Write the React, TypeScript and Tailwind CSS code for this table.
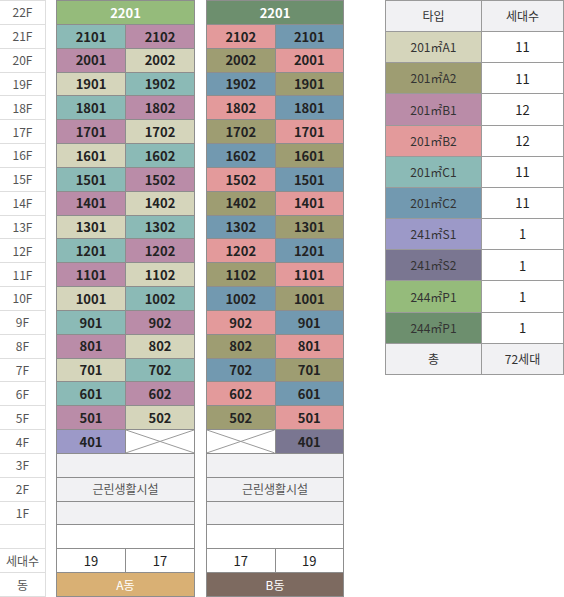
import React from "react";

const COLOR = {
  A1: "bg-[#d5d5bb]",
  A2: "bg-[#9e9d72]",
  B1: "bg-[#ba8ca8]",
  B2: "bg-[#e39a9b]",
  C1: "bg-[#8bbab6]",
  C2: "bg-[#7299b0]",
  S1: "bg-[#9c99c8]",
  S2: "bg-[#7a7691]",
  P1: "bg-[#95bb7b]",
  P2: "bg-[#6d8f6e]",
};

const cycleA = [
  [COLOR.C1, COLOR.B1],
  [COLOR.B1, COLOR.A1],
  [COLOR.A1, COLOR.C1],
];
const cycleB = [
  [COLOR.B2, COLOR.C2],
  [COLOR.A2, COLOR.B2],
  [COLOR.C2, COLOR.A2],
];

const floors = Array.from({ length: 17 }, (_, i) => 21 - i); // 21F..5F

const labels = [
  ...Array.from({ length: 22 }, (_, i) => `${22 - i}F`),
  "",
  "세대수",
  "동",
];

const types = [
  { name: "201㎡A1", bg: COLOR.A1, count: "11" },
  { name: "201㎡A2", bg: COLOR.A2, count: "11" },
  { name: "201㎡B1", bg: COLOR.B1, count: "12" },
  { name: "201㎡B2", bg: COLOR.B2, count: "12" },
  { name: "201㎡C1", bg: COLOR.C1, count: "11" },
  { name: "201㎡C2", bg: COLOR.C2, count: "11" },
  { name: "241㎡S1", bg: COLOR.S1, count: "1" },
  { name: "241㎡S2", bg: COLOR.S2, count: "1" },
  { name: "244㎡P1", bg: COLOR.P1, count: "1" },
  { name: "244㎡P1", bg: COLOR.P2, count: "1" },
];

function Unit({ bg, children }: { bg: string; children: React.ReactNode }) {
  return (
    <div className={`${bg} flex items-center justify-center text-[13px] font-bold text-[#222]`}>
      {children}
    </div>
  );
}

function Crossed() {
  return (
    <div className="bg-white">
      <svg className="w-full h-full block" viewBox="0 0 100 100" preserveAspectRatio="none">
        <line x1="0" y1="0" x2="100" y2="100" stroke="#9a9a9a" strokeWidth="1" vectorEffect="non-scaling-stroke" />
        <line x1="100" y1="0" x2="0" y2="100" stroke="#9a9a9a" strokeWidth="1" vectorEffect="non-scaling-stroke" />
      </svg>
    </div>
  );
}

function Building({
  top,
  cycle,
  left,
  right,
  counts,
  name,
  nameBg,
  topBg,
  width,
}: {
  top: string;
  cycle: string[][];
  left: string;
  right: string;
  counts: [string, string];
  name: string;
  nameBg: string;
  topBg: string;
  width: string;
}) {
  return (
    <div
      className={`grid grid-cols-2 grid-rows-[repeat(25,minmax(0,1fr))] gap-px bg-[#8d8d8d] p-px h-[597px] ${width}`}
    >
      <div className={`col-span-2 ${topBg} flex items-center justify-center text-[13px] font-bold text-white`}>
        {top}
      </div>
      {floors.map((f, i) => {
        const [c1, c2] = cycle[i % 3];
        return (
          <React.Fragment key={f}>
            <Unit bg={c1}>{`${f}${left}`}</Unit>
            <Unit bg={c2}>{`${f}${right}`}</Unit>
          </React.Fragment>
        );
      })}
      {left === "01" ? (
        <>
          <Unit bg={COLOR.S1}>401</Unit>
          <Crossed />
        </>
      ) : (
        <>
          <Crossed />
          <Unit bg={COLOR.S2}>401</Unit>
        </>
      )}
      <div className="col-span-2 bg-[#f1f1f3]" />
      <div className="col-span-2 bg-[#f1f1f3] flex items-center justify-center text-[12px] text-[#555]">
        근린생활시설
      </div>
      <div className="col-span-2 bg-[#f1f1f3]" />
      <div className="col-span-2 bg-white" />
      <div className="bg-white flex items-center justify-center text-[13px] text-[#222]">{counts[0]}</div>
      <div className="bg-white flex items-center justify-center text-[13px] text-[#222]">{counts[1]}</div>
      <div className={`col-span-2 ${nameBg} flex items-center justify-center text-[12px] text-white`}>
        {name}
      </div>
    </div>
  );
}

export default function App() {
  return (
    <div className="flex items-start bg-white w-[564px] h-[597px] overflow-hidden font-['Noto_Sans_CJK_KR','Noto_Sans',sans-serif]">
      <div className="grid grid-rows-[repeat(25,minmax(0,1fr))] gap-px bg-[#dedede] py-px pr-px h-[597px] w-[46px]">
        {labels.map((l, i) => (
          <div key={i} className="bg-white flex items-center justify-center text-[12px] text-[#555]">
            {l}
          </div>
        ))}
      </div>

      <div className="ml-[10px]">
        <Building
          top="2201"
          topBg="bg-[#95bb7b]"
          cycle={cycleA}
          left="01"
          right="02"
          counts={["19", "17"]}
          name="A동"
          nameBg="bg-[#d9b074]"
          width="w-[139px]"
        />
      </div>

      <div className="ml-[11px]">
        <Building
          top="2201"
          topBg="bg-[#6d8f6e]"
          cycle={cycleB}
          left="02"
          right="01"
          counts={["17", "19"]}
          name="B동"
          nameBg="bg-[#7d6a60]"
          width="w-[138px]"
        />
      </div>

      <div className="ml-[41px] grid grid-cols-[95px_1fr] grid-rows-[repeat(12,minmax(0,1fr))] gap-px bg-[#9a9a9a] p-px h-[375px] w-[179px]">
        <div className="bg-[#f1f1f3] flex items-center justify-center text-[12px] text-[#333]">타입</div>
        <div className="bg-[#f1f1f3] flex items-center justify-center text-[12px] text-[#333]">세대수</div>
        {types.map((t, i) => (
          <React.Fragment key={i}>
            <div className={`${t.bg} flex items-center justify-center text-[12px] text-[#333]`}>{t.name}</div>
            <div className="bg-white flex items-center justify-center text-[13px] text-[#222]">{t.count}</div>
          </React.Fragment>
        ))}
        <div className="bg-[#f1f1f3] flex items-center justify-center text-[12px] text-[#333]">총</div>
        <div className="bg-[#f1f1f3] flex items-center justify-center text-[12px] text-[#333]">72세대</div>
      </div>
    </div>
  );
}
